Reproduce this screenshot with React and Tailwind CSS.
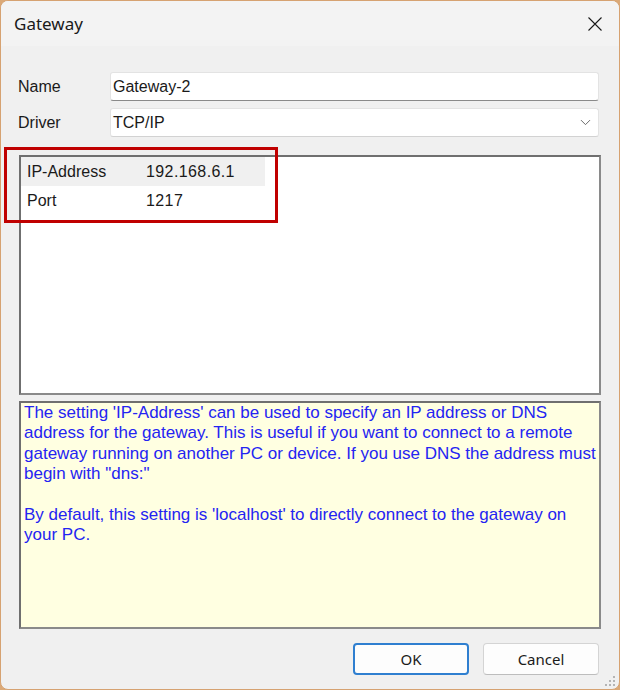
import React from 'react';
import { ChevronDown } from 'lucide-react';

const uiFont = { fontFamily: '"Liberation Sans", Arial, sans-serif' };
const titleFont = { fontFamily: '"Noto Sans", "Open Sans", sans-serif' };

const helpLines = [
  "The setting 'IP-Address' can be used to specify an IP address or DNS",
  'address for the gateway. This is useful if you want to connect to a remote',
  'gateway running on another PC or device. If you use DNS the address must',
  'begin with "dns:"',
  '',
  "By default, this setting is 'localhost' to directly connect to the gateway on",
  'your PC.',
];

const props = [
  { key: 'IP-Address', value: '192.168.6.1', selected: true },
  { key: 'Port', value: '1217', selected: false },
];

const ResizeGrip = () => (
  <svg width="14" height="14" viewBox="0 0 14 14" className="absolute right-[2px] bottom-[1px]">
    {[
      [10, 2],
      [6, 6], [10, 6],
      [2, 10], [6, 10], [10, 10],
    ].map(([x, y]) => (
      <rect key={`${x}-${y}`} x={x} y={y} width="2" height="2" fill="#b4b4b4" />
    ))}
  </svg>
);

export default function App() {
  return (
    <div className="w-[620px] h-[690px] bg-[#dba977]">
      <div className="relative w-full h-full rounded-[8px] border border-[#d6a271] bg-[#f0f0f0] overflow-hidden flex flex-col text-[#1a1a1a]" style={uiFont}>
        {/* title bar */}
        <div className="h-[45px] shrink-0 flex items-center justify-between pl-[13px] pr-[17px] bg-[#f3f3f3]">
          <span className="text-[17px] leading-none" style={titleFont}>Gateway</span>
          <svg width="14" height="14" viewBox="0 0 14 14">
            <path d="M0.5 0.5 L13.5 13.5 M13.5 0.5 L0.5 13.5" stroke="#1a1a1a" strokeWidth="1.1" />
          </svg>
        </div>

        <div className="flex flex-col pl-[17px] pr-[20px] pt-[26px]">
          <div className="flex items-center h-[29px]">
            <span className="w-[92px] text-[16px]">Name</span>
            <div className="flex-1 h-[29px] bg-white rounded-[3px] border border-[#e3e3e3] border-b-[#8a8a8a] flex items-center pl-[2px] text-[16px]">
              Gateway-2
            </div>
          </div>

          <div className="flex items-center h-[29px] mt-[7px]">
            <span className="w-[92px] text-[16px]">Driver</span>
            <div className="flex-1 h-[29px] bg-white rounded-[3px] border border-[#e3e3e3] border-b-[#d2d2d2] flex items-center justify-between pl-[2px] pr-[4px] text-[16px]">
              <span>TCP/IP</span>
              <ChevronDown size={17} strokeWidth={1.3} color="#5f5f5f" />
            </div>
          </div>

          {/* property grid */}
          <div className="ml-[1px] mt-[18px] w-[582px] h-[240px] bg-white border-2 border-[#8a8a8a] border-t-[#6f6f6f] border-l-[#6f6f6f] flex flex-col">
            {props.map((p) => (
              <div
                key={p.key}
                className={`flex items-center h-[29px] w-[244px] text-[16px] ${p.selected ? 'bg-[#f0f0f0]' : ''}`}
              >
                <span className="w-[125px] pl-[6px]">{p.key}</span>
                <span className="tracking-[0.4px]">{p.value}</span>
              </div>
            ))}
          </div>

          {/* help text */}
          <div className="ml-[1px] mt-[6px] w-[582px] h-[228px] bg-[#ffffe1] border-2 border-[#8a8a8a] border-t-[#6f6f6f] border-l-[#6f6f6f] pl-[3px] text-[17px] leading-[20.4px] text-[#2424f2]">
            {helpLines.map((line, i) => (
              <div key={i} className="whitespace-nowrap h-[20.4px]">{line}</div>
            ))}
          </div>

          <div className="flex justify-end gap-[14px] mt-[14px]" style={titleFont}>
            <button className="w-[116px] h-[32px] rounded-[4px] bg-[#fdfdfd] border-2 border-[#2f7fd0] text-[15px] text-[#1b1b1b]">
              OK
            </button>
            <button className="w-[116px] h-[32px] rounded-[4px] bg-[#fdfdfd] border border-[#d4d4d4] border-b-[#bdbdbd] text-[15px] text-[#1b1b1b]">
              Cancel
            </button>
          </div>
        </div>

        {/* annotation rectangle */}
        <div className="absolute left-[3px] top-[146px] w-[274px] h-[76px] border-[3px] border-[#c00000]" />

        <ResizeGrip />
      </div>
    </div>
  );
}
